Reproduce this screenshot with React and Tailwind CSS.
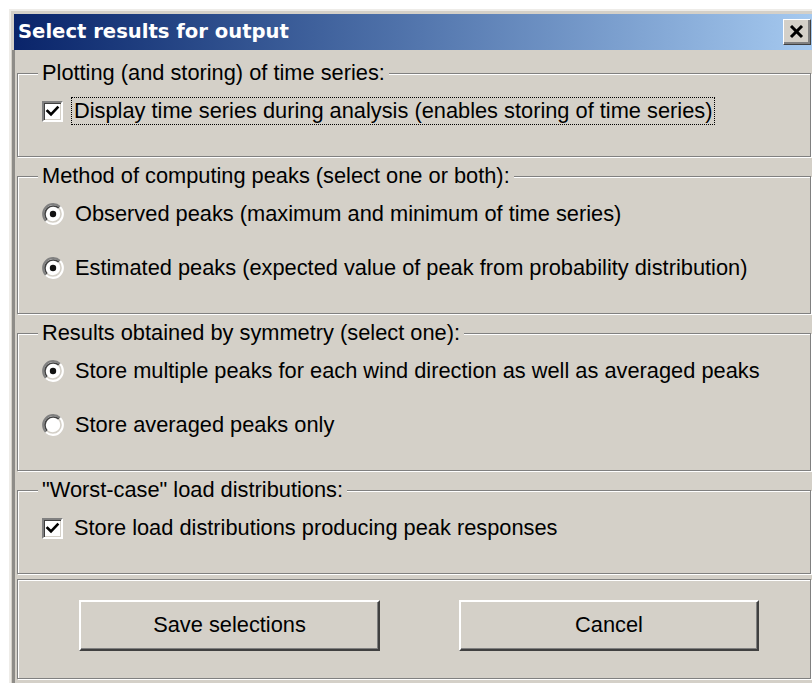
import React from "react";

const face = { fontFamily: '"Liberation Sans", Arial, sans-serif' };

function CheckBox({ checked }) {
  return (
    <div className="w-[21px] h-[21px] shrink-0 bg-white border-2 border-t-[#808080] border-l-[#808080] border-r-white border-b-white shadow-[inset_1px_1px_0_#404040,inset_-1px_-1px_0_#d4d0c8] flex items-center justify-center">
      {checked && (
        <svg width="17" height="17" viewBox="0 0 17 17">
          <path d="M3.5 8 L7 11.5 L13.5 4.5" stroke="#000" strokeWidth="2.6" fill="none" strokeLinecap="square" />
        </svg>
      )}
    </div>
  );
}

function Radio({ checked }) {
  return (
    <svg width="22" height="22" viewBox="0 0 22 22" className="shrink-0">
      <circle cx="11" cy="11" r="10" fill="#fff" />
      <path d="M3.93 18.07 A10 10 0 0 1 18.07 3.93" stroke="#808080" strokeWidth="2" fill="none" />
      <path d="M18.07 3.93 A10 10 0 0 1 3.93 18.07" stroke="#ffffff" strokeWidth="2" fill="none" />
      <path d="M5.17 16.83 A8.25 8.25 0 0 1 16.83 5.17" stroke="#404040" strokeWidth="1.6" fill="none" />
      <path d="M16.83 5.17 A8.25 8.25 0 0 1 5.17 16.83" stroke="#d4d0c8" strokeWidth="1.6" fill="none" />
      {checked && <circle cx="11" cy="11" r="3.2" fill="#111" />}
    </svg>
  );
}

function Row({ control, children, focused }) {
  return (
    <div className="h-[30px] flex items-center pl-[24px]">
      {control}
      <span
        className={
          "ml-[8px] px-[2px] leading-[26px] border border-dotted whitespace-nowrap " +
          (focused ? "border-black" : "border-transparent")
        }
      >
        {children}
      </span>
    </div>
  );
}

function GroupBox({ title, children, className }) {
  return (
    <div
      className={
        "relative w-[794px] border border-[#808080] shadow-[inset_1px_1px_0_#fff,1px_1px_0_#fff] pt-[22px] pb-[30px] " +
        className
      }
    >
      <div className="absolute -top-[13px] left-[20px] px-[4px] bg-[#d4d0c8] leading-[24px] whitespace-nowrap">
        {title}
      </div>
      {children}
    </div>
  );
}

function PushButton({ label, width }) {
  return (
    <button
      className={
        "h-[51px] bg-[#d4d0c8] border-2 border-t-white border-l-white border-r-[#404040] border-b-[#404040] shadow-[inset_-1px_-1px_0_#808080] text-black text-[21.8px] " +
        width
      }
      style={face}
    >
      {label}
    </button>
  );
}

export default function App() {
  return (
    <div className="w-[812px] h-[683px] overflow-hidden bg-white pt-[9px] pl-[9px] text-black text-[21.8px]" style={face}>
      <div className="w-[820px] h-[700px] bg-[#d4d0c8] border-t-2 border-l-2 border-[#eeece8] pt-[3px]">
        {/* title bar */}
        <div className="ml-[3px] w-[800px] h-[36px] flex items-center bg-gradient-to-r from-[#0a246a] to-[#a6caf0]">
          <span
            className="pl-[4px] text-white font-bold text-[19.6px] leading-none"
            style={{ fontFamily: '"DejaVu Sans", Verdana, sans-serif' }}
          >
            Select results for output
          </span>
          <div className="ml-auto mr-[3px] w-[28px] h-[26px] bg-[#d4d0c8] border border-t-white border-l-white border-r-[#404040] border-b-[#404040] shadow-[inset_-2px_-2px_0_#808080] flex items-center justify-center">
            <svg width="16" height="14" viewBox="0 0 16 14">
              <path d="M2 1 L13 12 M13 1 L2 12" stroke="#000" strokeWidth="3" />
            </svg>
          </div>
        </div>

        {/* client area */}
        <div className="ml-[1px] border-l-[3px] border-[#8e8c88] pl-[2px] pt-[23px] h-[700px]">
          <GroupBox title="Plotting (and storing) of time series:">
            <Row control={<CheckBox checked />} focused>
              Display time series during analysis (enables storing of time series)
            </Row>
          </GroupBox>

          <GroupBox title="Method of computing peaks (select one or both):" className="mt-[19px]">
            <div className="flex flex-col gap-[24px]">
              <Row control={<Radio checked />}>Observed peaks (maximum and minimum of time series)</Row>
              <Row control={<Radio checked />}>Estimated peaks (expected value of peak from probability distribution)</Row>
            </div>
          </GroupBox>

          <GroupBox title="Results obtained by symmetry (select one):" className="mt-[19px]">
            <div className="flex flex-col gap-[24px]">
              <Row control={<Radio checked />}>Store multiple peaks for each wind direction as well as averaged peaks</Row>
              <Row control={<Radio />}>Store averaged peaks only</Row>
            </div>
          </GroupBox>

          <GroupBox title={'"Worst-case" load distributions:'} className="mt-[19px]">
            <Row control={<CheckBox checked />}>Store load distributions producing peak responses</Row>
          </GroupBox>

          <div className="mt-[5px] w-[794px] border border-[#808080] shadow-[inset_1px_1px_0_#fff,1px_1px_0_#fff] pt-[20px] pb-[27px] pl-[61px] flex gap-[79px]">
            <PushButton label="Save selections" width="w-[301px]" />
            <PushButton label="Cancel" width="w-[300px]" />
          </div>
        </div>
      </div>
    </div>
  );
}
